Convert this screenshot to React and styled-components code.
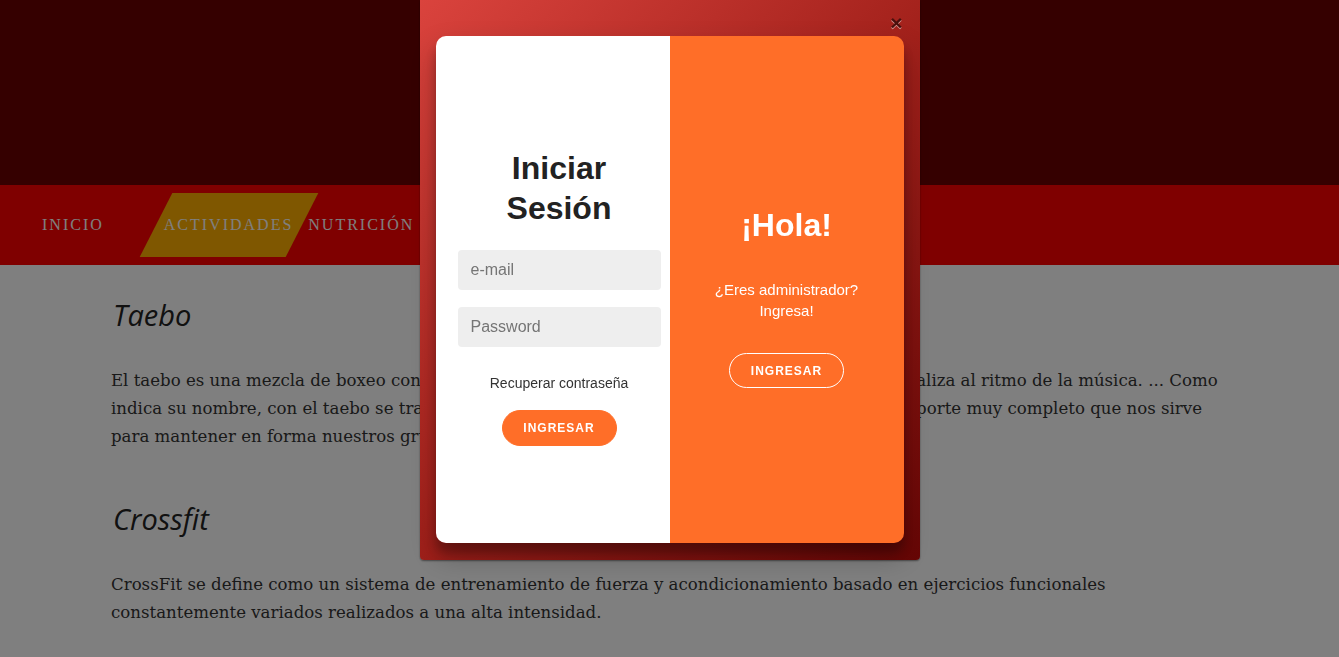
import React from "react";
import styled, { createGlobalStyle } from "styled-components";

const Global = createGlobalStyle`
  html, body { margin: 0; padding: 0; background: #fff; overflow: hidden; }
  * { box-sizing: border-box; }
`;

const Page = styled.div`
  width: 100%;
  min-height: 657px;
  background: #fff;
`;

const Header = styled.header`
  height: 185px;
  background: #6a0000;
`;

const Nav = styled.nav`
  height: 80px;
  background: #ff0000;
  display: flex;
  align-items: center;
  padding-left: 42px;
  gap: 15px;
`;

const NavItem = styled.a`
  position: relative;
  display: flex;
  align-items: center;
  height: 64px;
  margin-left: ${(p) => (p.$active ? "45px" : "0")};
  font-family: "Liberation Serif", "Times New Roman", serif;
  font-size: 16px;
  letter-spacing: 2px;
  text-transform: uppercase;
  color: #ffffff;
  text-decoration: none;
  z-index: 0;
  &::before {
    content: "";
    display: ${(p) => (p.$active ? "block" : "none")};
    position: absolute;
    top: 0;
    bottom: 0;
    left: -8px;
    right: -8px;
    background: #ffae00;
    transform: skewX(-27deg);
    z-index: -1;
  }
`;

const Main = styled.main`
  padding: 29px 111px 0;
`;

const SectionTitle = styled.h2`
  margin: 0 0 32px 2px;
  font-family: "Open Sans", sans-serif;
  font-style: italic;
  font-weight: 400;
  font-size: 29px;
  font-stretch: 94%;
  line-height: 41px;
  color: #222;
`;

const Paragraph = styled.p`
  margin: 0 0 47px;
  font-family: "DejaVu Serif", serif;
  font-size: 16.6px;
  line-height: 28px;
  color: #333;
`;

const Overlay = styled.div`
  position: fixed;
  inset: 0;
  background: rgba(0, 0, 0, 0.5);
  display: flex;
  justify-content: center;
  align-items: flex-start;
`;

const Modal = styled.div`
  position: relative;
  width: 500px;
  height: 560px;
  padding: 36px 16px 17px;
  border-radius: 0 0 4px 4px;
  background: linear-gradient(135deg, #da433d 0%, #a2211b 50%, #670605 100%);
  box-shadow: 0 1px 2px rgba(0, 0, 0, 0.45);
`;

const Close = styled.button`
  position: absolute;
  top: 12px;
  right: 17px;
  padding: 0;
  border: 0;
  background: none;
  font-family: "Liberation Sans", Arial, sans-serif;
  font-size: 21px;
  font-weight: 700;
  line-height: 1;
  color: #000;
  text-shadow: 0 1px 0 #fff;
  opacity: 0.55;
  cursor: pointer;
`;

const Card = styled.div`
  width: 468px;
  height: 507px;
  border-radius: 10px;
  overflow: hidden;
  display: grid;
  grid-template-columns: 234px 234px;
  box-shadow: 0 14px 28px rgba(0, 0, 0, 0.25), 0 10px 10px rgba(0, 0, 0, 0.22);
  font-family: "Liberation Sans", Arial, sans-serif;
`;

const Panel = styled.div`
  display: flex;
  flex-direction: column;
  align-items: center;
  padding: ${(p) => p.$pad};
  background: ${(p) => p.$bg};
  color: ${(p) => p.$color};
  text-align: center;
`;

const Heading = styled.h1`
  margin: 0;
  font-size: 32px;
  font-weight: 700;
  line-height: 40px;
  color: inherit;
`;

const Input = styled.input`
  width: 100%;
  height: 40px;
  margin-top: ${(p) => p.$mt};
  padding: 0 13px;
  border: 0;
  border-radius: 4px;
  background: #eee;
  font-family: "Liberation Sans", Arial, sans-serif;
  font-size: 16px;
  color: #333;
  outline: none;
  &::placeholder { color: #757575; }
`;

const Link = styled.a`
  margin-top: 28px;
  font-size: 14px;
  line-height: 16px;
  color: #333;
  text-decoration: none;
`;

const Button = styled.button`
  width: 115px;
  height: ${(p) => (p.$ghost ? "35px" : "36px")};
  margin-top: ${(p) => p.$mt};
  padding: 0;
  border-radius: 20px;
  border: 1px solid ${(p) => (p.$ghost ? "#fff" : "#ff6e28")};
  background: ${(p) => (p.$ghost ? "transparent" : "#ff6e28")};
  color: #fff;
  font-family: "Liberation Sans", Arial, sans-serif;
  font-size: 12px;
  font-weight: 700;
  letter-spacing: 1px;
  text-transform: uppercase;
  cursor: pointer;
`;

const Lead = styled.p`
  margin: 34px 0 0;
  font-size: 15px;
  line-height: 21px;
`;

export default function App() {
  return (
    <>
      <Global />
      <Page>
        <Header />
        <Nav>
          <NavItem href="#">Inicio</NavItem>
          <NavItem href="#" $active>Actividades</NavItem>
          <NavItem href="#">Nutrición</NavItem>
        </Nav>
        <Main>
          <SectionTitle>Taebo</SectionTitle>
          <Paragraph>
            El taebo es una mezcla de boxeo con artes marciales y ejercicios aeróbicos intensivos que se realiza al ritmo
            de la música. ... Como indica su nombre, con el taebo se trabaja todo el cuerpo de forma aeróbica, por lo
            que es un deporte muy completo que nos sirve para mantener en forma nuestros grupos musculares.
          </Paragraph>
          <SectionTitle>Crossfit</SectionTitle>
          <Paragraph>
            CrossFit se define como un sistema de entrenamiento de fuerza y acondicionamiento basado en ejercicios funcionales
            constantemente variados realizados a una alta intensidad.
          </Paragraph>
        </Main>
      </Page>
      <Overlay>
        <Modal>
          <Close aria-label="Cerrar">×</Close>
          <Card>
            <Panel $bg="#fff" $color="#222" $pad="112px 9px 0 22px">
              <Heading>Iniciar Sesión</Heading>
              <Input type="email" placeholder="e-mail" $mt="22px" />
              <Input type="password" placeholder="Password" $mt="17px" />
              <Link href="#">Recuperar contraseña</Link>
              <Button $mt="19px">Ingresar</Button>
            </Panel>
            <Panel $bg="#ff6e28" $color="#fff" $pad="169px 10px 0">
              <Heading>¡Hola!</Heading>
              <Lead>
                ¿Eres administrador?
                <br />
                Ingresa!
              </Lead>
              <Button $ghost $mt="32px">Ingresar</Button>
            </Panel>
          </Card>
        </Modal>
      </Overlay>
    </>
  );
}
